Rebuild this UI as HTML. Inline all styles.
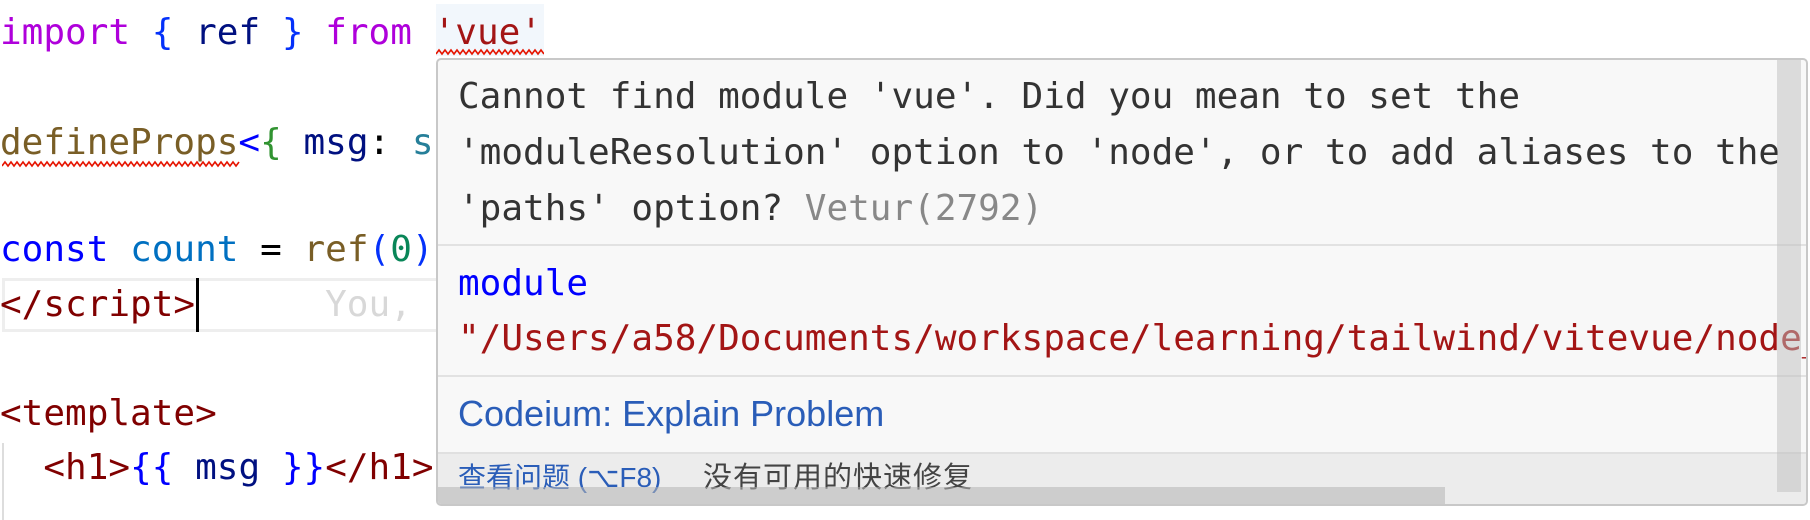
<!DOCTYPE html>
<html><head><meta charset="utf-8"><style>
*{margin:0;padding:0;box-sizing:border-box}
body{width:1810px;height:520px;background:#fff;position:relative;overflow:hidden;font-family:"DejaVu Sans Mono","Liberation Mono",monospace;font-size:36px}
.l{position:absolute;left:0;height:54px;line-height:54px;white-space:pre}
.pop{position:absolute;left:436px;top:58px;width:1372px;height:448px;background:#f8f8f8;border:2px solid #c8c8c8;border-radius:5px;overflow:hidden}
.pl{position:absolute;left:20px;white-space:pre;line-height:56px;height:56px;color:#333}
.sans{font-family:"Liberation Sans","Noto Sans CJK SC",sans-serif}
</style></head><body>
<div style="position:absolute;left:436px;top:4px;width:108px;height:52px;background:#f2f7fc"></div>
<div class="l" style="top:6px"><span style="color:#af00db">import</span> <span style="color:#0431fa">{</span> <span style="color:#001080">ref</span> <span style="color:#0431fa">}</span> <span style="color:#af00db">from</span> <span style="color:#a31515">'vue'</span></div>
<svg style="position:absolute;left:436px;top:48px" width="108" height="8"><polyline fill="none" stroke="#e51400" stroke-width="1.6" points="0,6 3,2 6,6 9,2 12,6 15,2 18,6 21,2 24,6 27,2 30,6 33,2 36,6 39,2 42,6 45,2 48,6 51,2 54,6 57,2 60,6 63,2 66,6 69,2 72,6 75,2 78,6 81,2 84,6 87,2 90,6 93,2 96,6 99,2 102,6 105,2 108,6"/></svg>
<div class="l" style="top:116px"><span style="color:#795e26">defineProps</span><span style="color:#0000ff">&lt;</span><span style="color:#319331">{</span> <span style="color:#001080">msg</span>: <span style="color:#267f99">s</span></div>
<svg style="position:absolute;left:2px;top:160px" width="238" height="8"><polyline fill="none" stroke="#e51400" stroke-width="1.6" points="0,6 3,2 6,6 9,2 12,6 15,2 18,6 21,2 24,6 27,2 30,6 33,2 36,6 39,2 42,6 45,2 48,6 51,2 54,6 57,2 60,6 63,2 66,6 69,2 72,6 75,2 78,6 81,2 84,6 87,2 90,6 93,2 96,6 99,2 102,6 105,2 108,6 111,2 114,6 117,2 120,6 123,2 126,6 129,2 132,6 135,2 138,6 141,2 144,6 147,2 150,6 153,2 156,6 159,2 162,6 165,2 168,6 171,2 174,6 177,2 180,6 183,2 186,6 189,2 192,6 195,2 198,6 201,2 204,6 207,2 210,6 213,2 216,6 219,2 222,6 225,2 228,6 231,2 234,6 237,2"/></svg>
<div class="l" style="top:223px"><span style="color:#0000ff">const</span> <span style="color:#0070c1">count</span> = <span style="color:#795e26">ref</span><span style="color:#0431fa">(</span><span style="color:#098658">0</span><span style="color:#0431fa">)</span></div>
<div style="position:absolute;left:2px;top:278px;width:440px;height:54px;border:3px solid #eeeeee"></div>
<div class="l" style="top:278px"><span style="color:#800000">&lt;/script&gt;</span>      <span style="color:#d8d8d8">You,</span></div>
<div style="position:absolute;left:196px;top:278px;width:3px;height:54px;background:#000"></div>
<div class="l" style="top:387px;color:#800000">&lt;template&gt;</div>
<div style="position:absolute;left:2px;top:443px;width:2px;height:77px;background:#ddd"></div>
<div class="l" style="top:441px">  <span style="color:#800000">&lt;h1&gt;</span><span style="color:#0000ff">{{</span> <span style="color:#001080">msg</span> <span style="color:#0000ff">}}</span><span style="color:#800000">&lt;/h1&gt;</span></div>

<div class="pop">
<div class="pl" style="top:9px">Cannot find module 'vue'. Did you mean to set the</div>
<div class="pl" style="top:65px">'moduleResolution' option to 'node', or to add aliases to the</div>
<div class="pl" style="top:121px">'paths' option?<span style="color:#888"> Vetur(2792)</span></div>
<div style="position:absolute;left:0;top:184px;width:100%;height:2px;background:#e2e2e2"></div>
<div class="pl" style="top:196px;color:#0000ff">module</div>
<div class="pl" style="top:251px;color:#a31515">"/Users/a58/Documents/workspace/learning/tailwind/vitevue/node_</div>
<div style="position:absolute;left:0;top:315px;width:100%;height:2px;background:#e2e2e2"></div>
<div class="pl sans" style="top:326px;font-size:36px;color:#2a5db8">Codeium: Explain Problem</div>
<div style="position:absolute;left:0;top:392px;width:100%;height:60px;background:#ececec;border-top:2px solid #e0e0e0"></div>
<div class="pl sans" style="top:392px;font-size:28px;line-height:52px;color:#2a5db8">查看问题 (⌥F8)</div>
<div class="pl sans" style="left:265px;top:392px;font-size:29px;line-height:52px;color:#444;letter-spacing:1px">没有可用的快速修复</div>
<div style="position:absolute;left:0;top:427px;width:1007px;height:21px;background:rgba(180,180,180,.55)"></div>
<div style="position:absolute;right:5px;top:0;width:24px;height:432px;background:rgba(190,190,190,.5)"></div>
</div>
</body></html>
